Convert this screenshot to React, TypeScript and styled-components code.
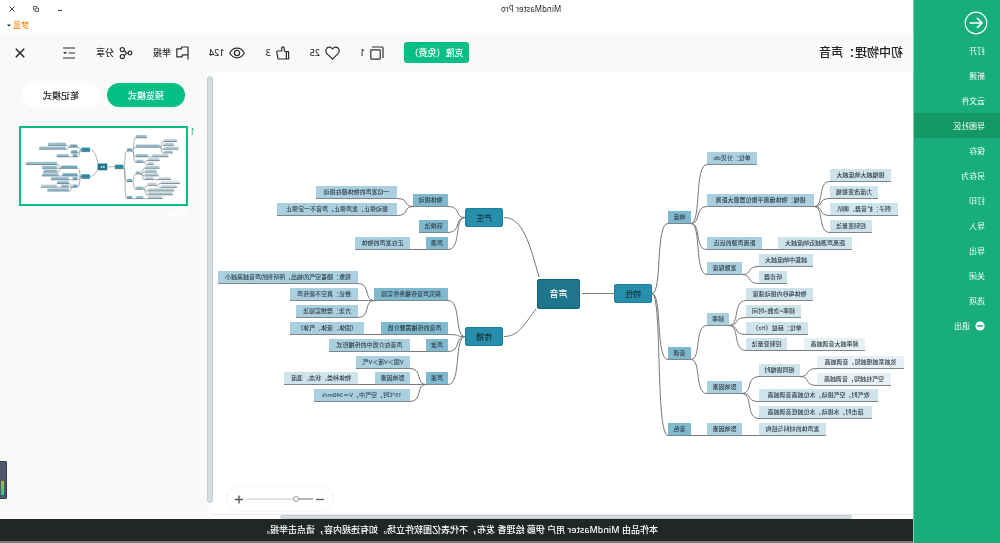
import React, { useState } from "react";
import styled, { createGlobalStyle } from "styled-components";

const green = "#06bf85";

const GlobalStyle = createGlobalStyle`
  * { box-sizing: border-box; }
  body {
    margin: 0;
    background: #fff;
    font-family: "Noto Sans", "Noto Sans CJK SC", sans-serif;
    color: #2d2d2d;
    overflow-x: hidden;
  }
  button, input { font: inherit; color: inherit; }
  button { border: 0; padding: 0; background: none; cursor: pointer; }
`;

const Page = styled.div`
  display: flex;
  min-height: 100vh;
  transform: scaleX(-1);
`;

/* ---------- side menu ---------- */

const Sidebar = styled.nav`
  flex: 0 0 87px;
  background: #17ae79;
  border-right: 1px solid #7fd0b2;
  color: #fff;
`;

const BackButton = styled.button`
  display: block;
  margin: 11px 0 3px 12px;
  height: 24px;
  svg { display: block; }
`;

const Menu = styled.ul`
  list-style: none;
  margin: 0;
  padding: 0;
`;

const MenuLink = styled.a<{ $active?: boolean }>`
  display: flex;
  align-items: center;
  gap: 5px;
  height: 25px;
  padding-left: 15px;
  font-size: 8px;
  line-height: 12px;
  color: #fff;
  text-decoration: none;
  background: ${(p) => (p.$active ? "#149868" : "transparent")};
`;

/* ---------- title bar ---------- */

const Column = styled.div`
  flex: 1;
  min-width: 0;
  display: flex;
  flex-direction: column;
`;

const TitleBar = styled.header`
  display: grid;
  grid-template-columns: 1fr 149px;
  grid-template-rows: 17px 16px;
  align-items: center;
  background: #fff;
`;

const AppName = styled.div`
  text-align: center;
  font-size: 8px;
  line-height: 12px;
`;

const WindowButtons = styled.div`
  display: flex;
  justify-content: flex-end;
`;

const WindowButton = styled.button`
  width: 24px;
  height: 17px;
  display: flex;
  align-items: center;
  justify-content: center;
`;

const UserMenu = styled.button`
  grid-column: 2;
  justify-self: end;
  margin-right: 7px;
  display: flex;
  align-items: center;
  gap: 2px;
  color: #ff8a1e;
  font-size: 8px;
  font-weight: 500;
  line-height: 12px;
`;

/* ---------- toolbar ---------- */

const Toolbar = styled.div`
  display: flex;
  align-items: center;
  height: 39px;
  padding: 0 15px 0 10px;
  background: #f9f9f9;
`;

const DocTitle = styled.h1`
  flex: 1;
  margin: 0;
  font-size: 12px;
  line-height: 18px;
  font-weight: 500;
  color: #222;
`;

const Actions = styled.div`
  display: flex;
  align-items: center;
  gap: 20px;
`;

const CloneButton = styled.button`
  width: 65px;
  height: 21px;
  border-radius: 3px;
  background: ${green};
  color: #fff;
  font-size: 9px;
  font-weight: 500;
  line-height: 21px;
  white-space: nowrap;
  overflow: hidden;
`;

const Action = styled.button`
  display: flex;
  align-items: center;
  gap: 5px;
  font-size: 9px;
  font-weight: 500;
  line-height: 14px;
  white-space: nowrap;
  svg { display: block; }
`;

const CloseButton = styled(Action)`
  margin-left: 17px;
`;

/* ---------- work area ---------- */

const Body = styled.div`
  flex: 1;
  display: flex;
`;

const Workspace = styled.main`
  position: relative;
  flex: 1;
  min-width: 0;
  display: flex;
  flex-direction: column;
  background: #fff;
`;

const Canvas = styled.div`
  flex: 1;
  overflow: hidden;
`;

const Board = styled.div`
  position: relative;
  width: 700px;
  height: 442px;
`;

const Links = styled.svg`
  position: absolute;
  inset: 0;
  width: 700px;
  height: 442px;
`;

const fills = ["#1f758c", "#278fab", "#7fb9cf", "#aacfdf", "#cfe3eb", "#e7f1f5"];

const Topic = styled.div<{ $level: number }>`
  position: absolute;
  display: flex;
  align-items: center;
  justify-content: center;
  height: ${(p) => (p.$level === 0 ? 30 : p.$level === 1 ? 19 : 13)}px;
  font-size: ${(p) => (p.$level === 0 ? 9 : p.$level === 1 ? 8 : 6)}px;
  font-weight: 500;
  line-height: 12px;
  white-space: nowrap;
  color: ${(p) => (p.$level === 0 ? "#fff" : p.$level === 1 ? "#173640" : "#2f3f46")};
  background: ${(p) => fills[p.$level]};
  border: ${(p) => (p.$level < 2 ? "1px solid " + (p.$level ? "#1b809b" : "#12647a") : "0")};
  border-bottom: ${(p) => (p.$level < 2 ? "" : "1px solid #7d878b")};
  border-radius: ${(p) => (p.$level < 2 ? 2 : 0)}px;
`;

const HScroll = styled.div`
  height: 5px;
  padding: 0 67px 0 61px;
  border-top: 1px solid #e6eaeb;
`;

const Thumb = styled.div`
  height: 100%;
  background: #d3dcde;
  border: 1px solid #c3cdd0;
  border-radius: 2px;
`;

const VScroll = styled.div`
  flex: 0 0 6px;
  display: flex;
  flex-direction: column;
  padding: 4px 0 16px;
  background: #fdfdfd;
  ${Thumb} { flex: 1; border-radius: 3px; }
`;

const ZoomBar = styled.div`
  position: absolute;
  right: 14px;
  bottom: 8px;
  width: 106px;
  height: 24px;
  padding: 0 8px;
  display: flex;
  align-items: center;
  gap: 3px;
  border-radius: 12px;
  background: #fff;
  box-shadow: 0 0 2px rgba(0, 0, 0, 0.12);
  svg { display: block; }
`;

const ZoomSlider = styled.input`
  flex: 1;
  min-width: 0;
  height: 8px;
  margin: 0;
  appearance: none;
  background: linear-gradient(to right, #b5b5b5 25%, #e0e0e0 25%) center / 100% 2px no-repeat;
  &::-webkit-slider-thumb {
    appearance: none;
    width: 6px;
    height: 6px;
    border: 1px solid #9a9a9a;
    border-radius: 50%;
    background: #fff;
  }
`;

/* ---------- page panel ---------- */

const Panel = styled.aside`
  flex: 0 0 207px;
  background: #f9f9f9;
`;

const Tabs = styled.div`
  display: flex;
  gap: 7px;
  padding: 11px 22px 0;
`;

const Tab = styled.button<{ $on?: boolean }>`
  flex: 1;
  height: 24px;
  border-radius: 12px;
  font-size: 9px;
  font-weight: 500;
  background: ${(p) => (p.$on ? green : "#fff")};
  color: ${(p) => (p.$on ? "#fff" : "#222")};
`;

const PageRow = styled.div`
  display: flex;
  padding: 19px 19px 0 12px;
`;

const PageNumber = styled.span`
  flex: 0 0 7px;
  font-size: 9px;
  line-height: 12px;
  color: #1faf6f;
`;

const PageCard = styled.figure`
  flex: 1;
  margin: 0;
`;

const Preview = styled.svg`
  display: block;
  width: 100%;
  height: 80px;
  border: 1px solid ${green};
  outline: 1px solid ${green};
  outline-offset: -2px;
  background: #fff;
`;

const PageName = styled.figcaption`
  font-size: 9px;
  line-height: 14px;
  color: #fff;
`;

const Footer = styled.footer`
  height: 24px;
  border-bottom: 2px solid #737b7a;
  background: #222627;
  color: #fff;
  font-size: 9px;
  font-weight: 500;
  line-height: 22px;
  text-align: center;
  padding-right: 6px;
`;

const Dock = styled.div`
  position: absolute;
  right: 0;
  top: 461px;
  width: 7px;
  height: 38px;
  padding: 19px 1px 3px 2px;
  border: 1px solid #34394c;
  border-right: 0;
  border-radius: 2px 0 0 2px;
  background: #50566d;
`;

const Meter = styled.div`
  height: 100%;
  background: linear-gradient(#a4b83a, #2fc39a);
`;

/* ---------- mind map data ---------- */

interface Item {
  text: string;
  x: number;
  y: number;
  w: number;
  kids: Item[];
}

const t = (text: string, x: number, w: number, y: number, kids: Item[] = []): Item => ({ text, x, y, w, kids });

const root = { text: "声音", x: 333, y: 207, w: 43 };

const leftSide: Item[] = [
  t("特性", 261, 38, 212, [
    t("响度", 222, 23, 139, [
      t("单位：分贝db", 156, 50, 80),
      t("振幅：物体偏离平衡位置最大距离", 99, 107, 122, [
        t("振幅越大响度越大", 22, 61, 97),
        t("力度改变振幅", 35, 48, 114),
        t("例子：扩音器、喇叭", 15, 68, 131),
        t("控制变量法", 41, 42, 148),
      ]),
      t("距离声源的远近", 151, 55, 165, [t("距离声源越近响度越大", 61, 74, 165)]),
      t("发散程度", 171, 35, 190, [t("越集中响度越大", 100, 54, 182), t("听诊器", 126, 28, 199)]),
    ]),
    t("音调", 222, 23, 275, [
      t("频率", 184, 22, 241, [
        t("物体每秒内振动速度", 100, 67, 216),
        t("频率=次数÷时间", 112, 55, 233),
        t("单位：赫兹（Hz）", 105, 62, 250),
        t("控制变量法", 126, 41, 266, [t("频率越大音调越高", 48, 61, 266)]),
      ]),
      t("影响因素", 171, 35, 309, [
        t("相同振幅时", 113, 41, 292, [
          t("弦越紧越细越短，音调越高", 9, 87, 284),
          t("空气柱越短，音调越高", 22, 74, 301),
        ]),
        t("吹气时，空气振动，水位越高音调越高", 35, 119, 317),
        t("敲击时，水振动，水位越低音调越高", 41, 113, 334),
      ]),
    ]),
    t("音色", 222, 23, 351, [t("影响因素", 171, 35, 351, [t("发声体的材料与结构", 87, 67, 351)])]),
  ]),
];

const rightSide: Item[] = [
  t("产生", 410, 38, 136, [
    t("物体振动", 465, 35, 122, [
      t("一切发声的物体都在振动", 516, 81, 114),
      t("振动停止，发声停止，声音不一定停止", 516, 120, 131),
    ]),
    t("转换法", 465, 29, 148),
    t("声源", 465, 22, 165, [t("正在发声的物体", 503, 55, 165)]),
  ]),
  t("传播", 410, 38, 255, [
    t("探究声音传播条件实验", 465, 74, 216, [
      t("现象：随着空气的抽出，所听到的声音越来越小", 555, 140, 199),
      t("推论：真空不能传声", 555, 68, 216),
      t("方法：理想实验法", 555, 62, 233),
    ]),
    t("声音的传播需要介质", 465, 67, 250, [t("（固体、液体、气体）", 549, 74, 250)]),
    t("声波", 465, 22, 267, [t("声音在介质中的传播形式", 503, 81, 267)]),
    t("声速", 465, 22, 300, [
      t("V固＞V液＞V气", 503, 54, 284),
      t("影响因素", 503, 35, 300, [t("物体种类、状态、温度", 555, 74, 300)]),
      t("15℃时，空气中，V＝340m/s", 503, 96, 317),
    ]),
  ]),
];

interface Placed {
  item: Item;
  level: number;
}

const topics: Placed[] = [];
const links: string[] = [
  "M299 221.5H331",
  "M374 205C383 173 390 145.5 409 145.5",
  "M377 237C388 251 394 264.5 409 264.5",
];

const joinY = (item: Item, level: number) => item.y + (level === 1 ? 9.5 : 12.5);

/* Children beyond the second level take the fill one step lighter. */
function place(item: Item, level: number, dir: 1 | -1) {
  topics.push({ item, level });
  const px = dir > 0 ? item.x + item.w : item.x;
  const py = joinY(item, level);
  item.kids.forEach((kid) => {
    const cx = dir > 0 ? kid.x : kid.x + kid.w;
    const cy = joinY(kid, level + 1);
    const dx = cx - px;
    links.push(
      py === cy ? `M${px} ${py}H${cx}` : `M${px} ${py}C${px + dx * 0.65} ${py} ${px + dx * 0.2} ${cy} ${cx} ${cy}`
    );
    place(kid, level + 1, dir);
  });
}
leftSide.forEach((item) => place(item, 1, -1));
rightSide.forEach((item) => place(item, 1, 1));

const linkPath = links.join("");

function MindMap() {
  return (
    <Board>
      <Links viewBox="0 0 700 442" aria-hidden="true">
        <path d={linkPath} fill="none" stroke="#777" strokeWidth="1" />
      </Links>
      <Topic $level={0} style={{ left: root.x, top: root.y, width: root.w }}>
        {root.text}
      </Topic>
      {topics.map(({ item, level }, i) => (
        <Topic key={i} $level={level} style={{ left: item.x, top: item.y, width: item.w }}>
          {item.text}
        </Topic>
      ))}
    </Board>
  );
}

function MapPreview() {
  return (
    <Preview viewBox="-22 47 743 342" role="img" aria-label="Page-1">
      <path d={linkPath} fill="none" stroke="#888" strokeWidth="3" />
      <rect x={root.x} y={root.y} width={root.w} height="30" fill={fills[0]} />
      <path d="M344 222h20" stroke="#cfe6ee" strokeWidth="7" strokeDasharray="7 3" />
      {topics.map(({ item, level }, i) => {
        const h = level === 1 ? 19 : 13;
        return (
          <g key={i}>
            <rect x={item.x} y={item.y} width={item.w} height={h} fill={fills[level]} />
            <path d={`M${item.x} ${item.y + h - 1}h${item.w}`} stroke="#6c7f88" strokeWidth="4" />
            <path
              d={`M${item.x + 6} ${item.y + h / 2 - 1}h${item.w - 12}`}
              stroke="#48606b"
              strokeOpacity="0.4"
              strokeWidth="4"
              strokeDasharray="5 2"
            />
          </g>
        );
      })}
    </Preview>
  );
}

/* ---------- icons ---------- */

interface IconProps {
  w?: number;
  h?: number;
  children: React.ReactNode;
}

const Icon = ({ w = 14, h = 14, children }: IconProps) => (
  <svg
    width={w}
    height={h}
    viewBox={`0 0 ${w} ${h}`}
    fill="none"
    stroke="currentColor"
    strokeWidth="1.2"
    strokeLinejoin="round"
    aria-hidden="true"
  >
    {children}
  </svg>
);

const CopyIcon = () => (
  <Icon>
    <rect x="3.8" y="3.8" width="9.4" height="9.4" rx="0.8" />
    <path d="M1 12V2.2A1.2 1.2 0 0 1 2.2 1H12" />
  </Icon>
);
const HeartIcon = () => (
  <Icon w={15}>
    <path d="M7.5 13.2L2 7.6C0.4 5.9 0.5 3.4 2 2C3.5 0.6 6.1 0.9 7.5 3C8.9 0.9 11.5 0.6 13 2C14.5 3.4 14.6 5.9 13 7.6Z" />
  </Icon>
);
const ThumbIcon = () => (
  <Icon>
    <path d="M1.4 5.6H3.6V13H1.4ZM3.6 6.2L5.6 5L6 1.2C7.6 0.4 8.6 1.4 8.4 3L8.1 5H12.2C13 5 13.3 5.6 13.2 6.3L12.2 12C12.1 12.7 11.7 13 11 13H5.4L3.6 12.4" />
  </Icon>
);
const EyeIcon = () => (
  <Icon w={16}>
    <path d="M0.8 7C4 0.6 12 0.6 15.2 7C12 13.4 4 13.4 0.8 7Z" />
    <circle cx="8" cy="7" r="2.6" />
  </Icon>
);
const FlagIcon = () => (
  <Icon w={13}>
    <path d="M1 13.5V1H7.4V2.8H12.2V10.8H6.8V8.8H1" />
  </Icon>
);
const ShareIcon = () => (
  <Icon>
    <circle cx="3" cy="7" r="1.8" />
    <circle cx="10.7" cy="3.6" r="2.1" />
    <circle cx="10.7" cy="10.6" r="2.1" />
    <path d="M4.8 7H6.4L8.8 4.6M6.4 7L8.8 9.6" />
  </Icon>
);
const OutlineIcon = () => (
  <Icon>
    <path d="M1 2H13M1 7H7.4M1 12H13" />
    <path d="M9.2 6H12.8L11 8.2Z" fill="currentColor" stroke="none" />
  </Icon>
);
const CloseIcon = () => (
  <Icon w={10} h={10}>
    <path d="M0.8 0.8L9.2 9.2M9.2 0.8L0.8 9.2" strokeWidth="1.6" />
  </Icon>
);

const menuItems = ["打开", "新建", "云文件", "导图社区", "保存", "另存为", "打印", "导入", "导出", "关闭", "选项"];

export default function App() {
  const [mode, setMode] = useState(0);
  const [zoom, setZoom] = useState(23);
  return (
    <>
      <GlobalStyle />
      <Page>
        <Sidebar>
          <BackButton aria-label="返回">
            <svg width="24" height="24" viewBox="0 0 24 24" fill="none" stroke="#fff" aria-hidden="true">
              <circle cx="12" cy="12" r="10.8" strokeWidth="1.2" />
              <path d="M18.4 12H6M11 7L6 12L11 17" strokeWidth="1.6" />
            </svg>
          </BackButton>
          <Menu>
            {menuItems.map((name, i) => (
              <li key={name}>
                <MenuLink href="#" $active={i === 3}>
                  {name}
                </MenuLink>
              </li>
            ))}
            <li>
              <MenuLink href="#">
                <svg width="10" height="10" viewBox="0 0 10 10" aria-hidden="true">
                  <circle cx="5" cy="5" r="4.6" fill="#fff" />
                  <path d="M2.2 5H7.8" stroke="#17ae79" strokeWidth="1.6" />
                </svg>
                退出
              </MenuLink>
            </li>
          </Menu>
        </Sidebar>

        <Column>
          <TitleBar>
            <AppName>MindMaster Pro</AppName>
            <WindowButtons>
              <WindowButton aria-label="最小化">
                <svg width="6" height="6" viewBox="0 0 6 6" stroke="#333" aria-hidden="true">
                  <path d="M1 4.5H5" />
                </svg>
              </WindowButton>
              <WindowButton aria-label="还原">
                <svg width="6" height="6" viewBox="0 0 6 6" fill="none" stroke="#444" strokeWidth="0.8" aria-hidden="true">
                  <path d="M0.5 2.2H3.8V5.5H0.5ZM2 2V0.5H5.5V4H4" />
                </svg>
              </WindowButton>
              <WindowButton aria-label="关闭窗口">
                <svg width="6" height="6" viewBox="0 0 6 6" stroke="#333" strokeWidth="0.9" aria-hidden="true">
                  <path d="M0.6 0.6L5.4 5.4M5.4 0.6L0.6 5.4" />
                </svg>
              </WindowButton>
            </WindowButtons>
            <UserMenu>
              梦蓝
              <svg width="4" height="3" viewBox="0 0 4 3" aria-hidden="true">
                <path d="M0 0.5H4L2 2.8Z" fill="#333" />
              </svg>
            </UserMenu>
          </TitleBar>

          <Toolbar>
            <DocTitle>初中物理：声音</DocTitle>
            <Actions>
              <CloneButton>克隆（免费）</CloneButton>
              <Action aria-label="克隆数"><CopyIcon />1</Action>
              <Action aria-label="收藏"><HeartIcon />25</Action>
              <Action aria-label="点赞"><ThumbIcon />3</Action>
              <Action aria-label="浏览"><EyeIcon />124</Action>
              <Action><FlagIcon />举报</Action>
              <Action><ShareIcon />分享</Action>
              <Action aria-label="大纲"><OutlineIcon /></Action>
              <CloseButton aria-label="关闭"><CloseIcon /></CloseButton>
            </Actions>
          </Toolbar>

          <Body>
            <Workspace>
              <Canvas>
                <MindMap />
              </Canvas>
              <HScroll>
                <Thumb />
              </HScroll>
              <ZoomBar>
                <button aria-label="缩小" onClick={() => setZoom(Math.max(0, zoom - 5))}>
                  <svg width="9" height="9" viewBox="0 0 9 9" stroke="#666" strokeWidth="1.4" aria-hidden="true">
                    <path d="M1 4.5H9" />
                  </svg>
                </button>
                <ZoomSlider
                  type="range"
                  aria-label="缩放"
                  value={zoom}
                  onChange={(e) => setZoom(Number(e.target.value))}
                />
                <button aria-label="放大" onClick={() => setZoom(Math.min(100, zoom + 5))}>
                  <svg width="9" height="9" viewBox="0 0 9 9" stroke="#555" strokeWidth="1.4" aria-hidden="true">
                    <path d="M1 4.5H9M5 0.5V8.5" />
                  </svg>
                </button>
              </ZoomBar>
            </Workspace>
            <VScroll>
              <Thumb />
            </VScroll>
            <Panel>
              <Tabs>
                <Tab $on={mode === 0} onClick={() => setMode(0)}>预览模式</Tab>
                <Tab $on={mode === 1} onClick={() => setMode(1)}>笔记模式</Tab>
              </Tabs>
              <PageRow>
                <PageNumber>1</PageNumber>
                <PageCard>
                  <MapPreview />
                  <PageName>Page-1</PageName>
                </PageCard>
              </PageRow>
            </Panel>
          </Body>

          <Footer>
            本作品由 MindMaster 用户 伊藤 绘理香 发布，不代表亿图软件立场。如有违规内容，请点击举报。
          </Footer>
        </Column>
        <Dock>
          <Meter />
        </Dock>
      </Page>
    </>
  );
}
